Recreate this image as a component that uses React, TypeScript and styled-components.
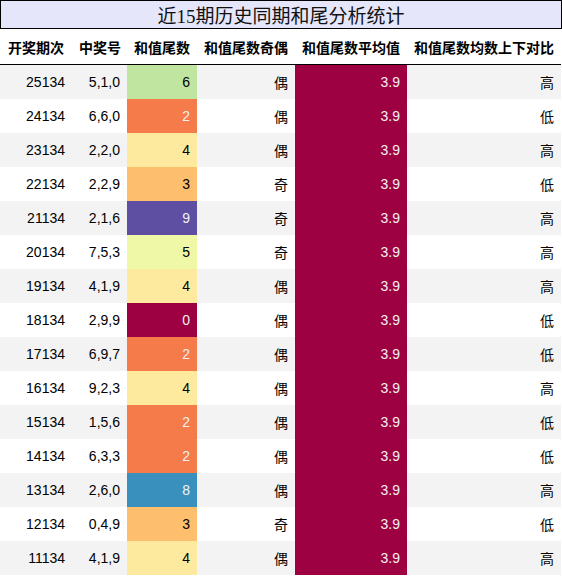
import styled, { createGlobalStyle } from "styled-components";

const GlobalStyle = createGlobalStyle`
  body {
    margin: 0;
    background: #ffffff;
    font-family: "Liberation Sans", "Noto Sans CJK SC", sans-serif;
  }
`;

const Page = styled.div`
  width: 562px;
`;

const Title = styled.div`
  box-sizing: border-box;
  width: 562px;
  height: 29px;
  border: 1px solid #000;
  background-color: #e6e6fa;
  display: flex;
  justify-content: center;
  align-items: center;
  font-family: "Liberation Serif", "Noto Sans CJK SC", serif;
  font-size: 19px;
  color: #111;
`;

const Table = styled.table`
  border-collapse: collapse;
  table-layout: fixed;
  width: 561px;
  font-size: 14px;
`;

const HeadCell = styled.th`
  height: 35px;
  padding: 0 7px;
  font-weight: bold;
  text-align: center;
  white-space: nowrap;
  color: #000;
  border-bottom: 1px solid #000;
`;

const Row = styled.tr<{ $striped: boolean }>`
  height: 34px;
  background-color: ${(p) => (p.$striped ? "#f3f3f3" : "#ffffff")};
`;

const Cell = styled.td<{ $bg?: string; $light?: boolean }>`
  padding: 0 7px;
  text-align: right;
  white-space: nowrap;
  color: ${(p) => (p.$light ? "#f1f1f1" : "#000")};
  background-color: ${(p) => p.$bg || "transparent"};
`;

// spectral colours for 和值尾数 0-9
const spectral: Record<number, string> = {
  0: "#9e0142",
  2: "#f67b4a",
  3: "#fdbe6e",
  4: "#feea9e",
  5: "#eff8a6",
  6: "#c0e5a0",
  8: "#3a90bc",
  9: "#5e4fa2",
};
const darkTail = [0, 2, 8, 9];

const widths = [72, 55, 70, 98, 112, 154];
const headers = ["开奖期次", "中奖号", "和值尾数", "和值尾数奇偶", "和值尾数平均值", "和值尾数均数上下对比"];

const rows: [string, string, number, string, string][] = [
  ["25134", "5,1,0", 6, "偶", "高"],
  ["24134", "6,6,0", 2, "偶", "低"],
  ["23134", "2,2,0", 4, "偶", "高"],
  ["22134", "2,2,9", 3, "奇", "低"],
  ["21134", "2,1,6", 9, "奇", "高"],
  ["20134", "7,5,3", 5, "奇", "高"],
  ["19134", "4,1,9", 4, "偶", "高"],
  ["18134", "2,9,9", 0, "偶", "低"],
  ["17134", "6,9,7", 2, "偶", "低"],
  ["16134", "9,2,3", 4, "偶", "高"],
  ["15134", "1,5,6", 2, "偶", "低"],
  ["14134", "6,3,3", 2, "偶", "低"],
  ["13134", "2,6,0", 8, "偶", "高"],
  ["12134", "0,4,9", 3, "奇", "低"],
  ["11134", "4,1,9", 4, "偶", "高"],
];

function App() {
  return (
    <Page>
      <GlobalStyle />
      <Title>近15期历史同期和尾分析统计</Title>
      <Table>
        <colgroup>
          {widths.map((w, i) => (
            <col key={i} style={{ width: w }} />
          ))}
        </colgroup>
        <thead>
          <tr>
            {headers.map((h) => (
              <HeadCell key={h}>{h}</HeadCell>
            ))}
          </tr>
        </thead>
        <tbody>
          {rows.map(([issue, nums, tail, parity, cmp], i) => (
            <Row key={issue} $striped={i % 2 === 0}>
              <Cell>{issue}</Cell>
              <Cell>{nums}</Cell>
              <Cell $bg={spectral[tail]} $light={darkTail.includes(tail)}>
                {tail}
              </Cell>
              <Cell>{parity}</Cell>
              <Cell $bg="#9e0142" $light>
                3.9
              </Cell>
              <Cell>{cmp}</Cell>
            </Row>
          ))}
        </tbody>
      </Table>
    </Page>
  );
}

export default App;
